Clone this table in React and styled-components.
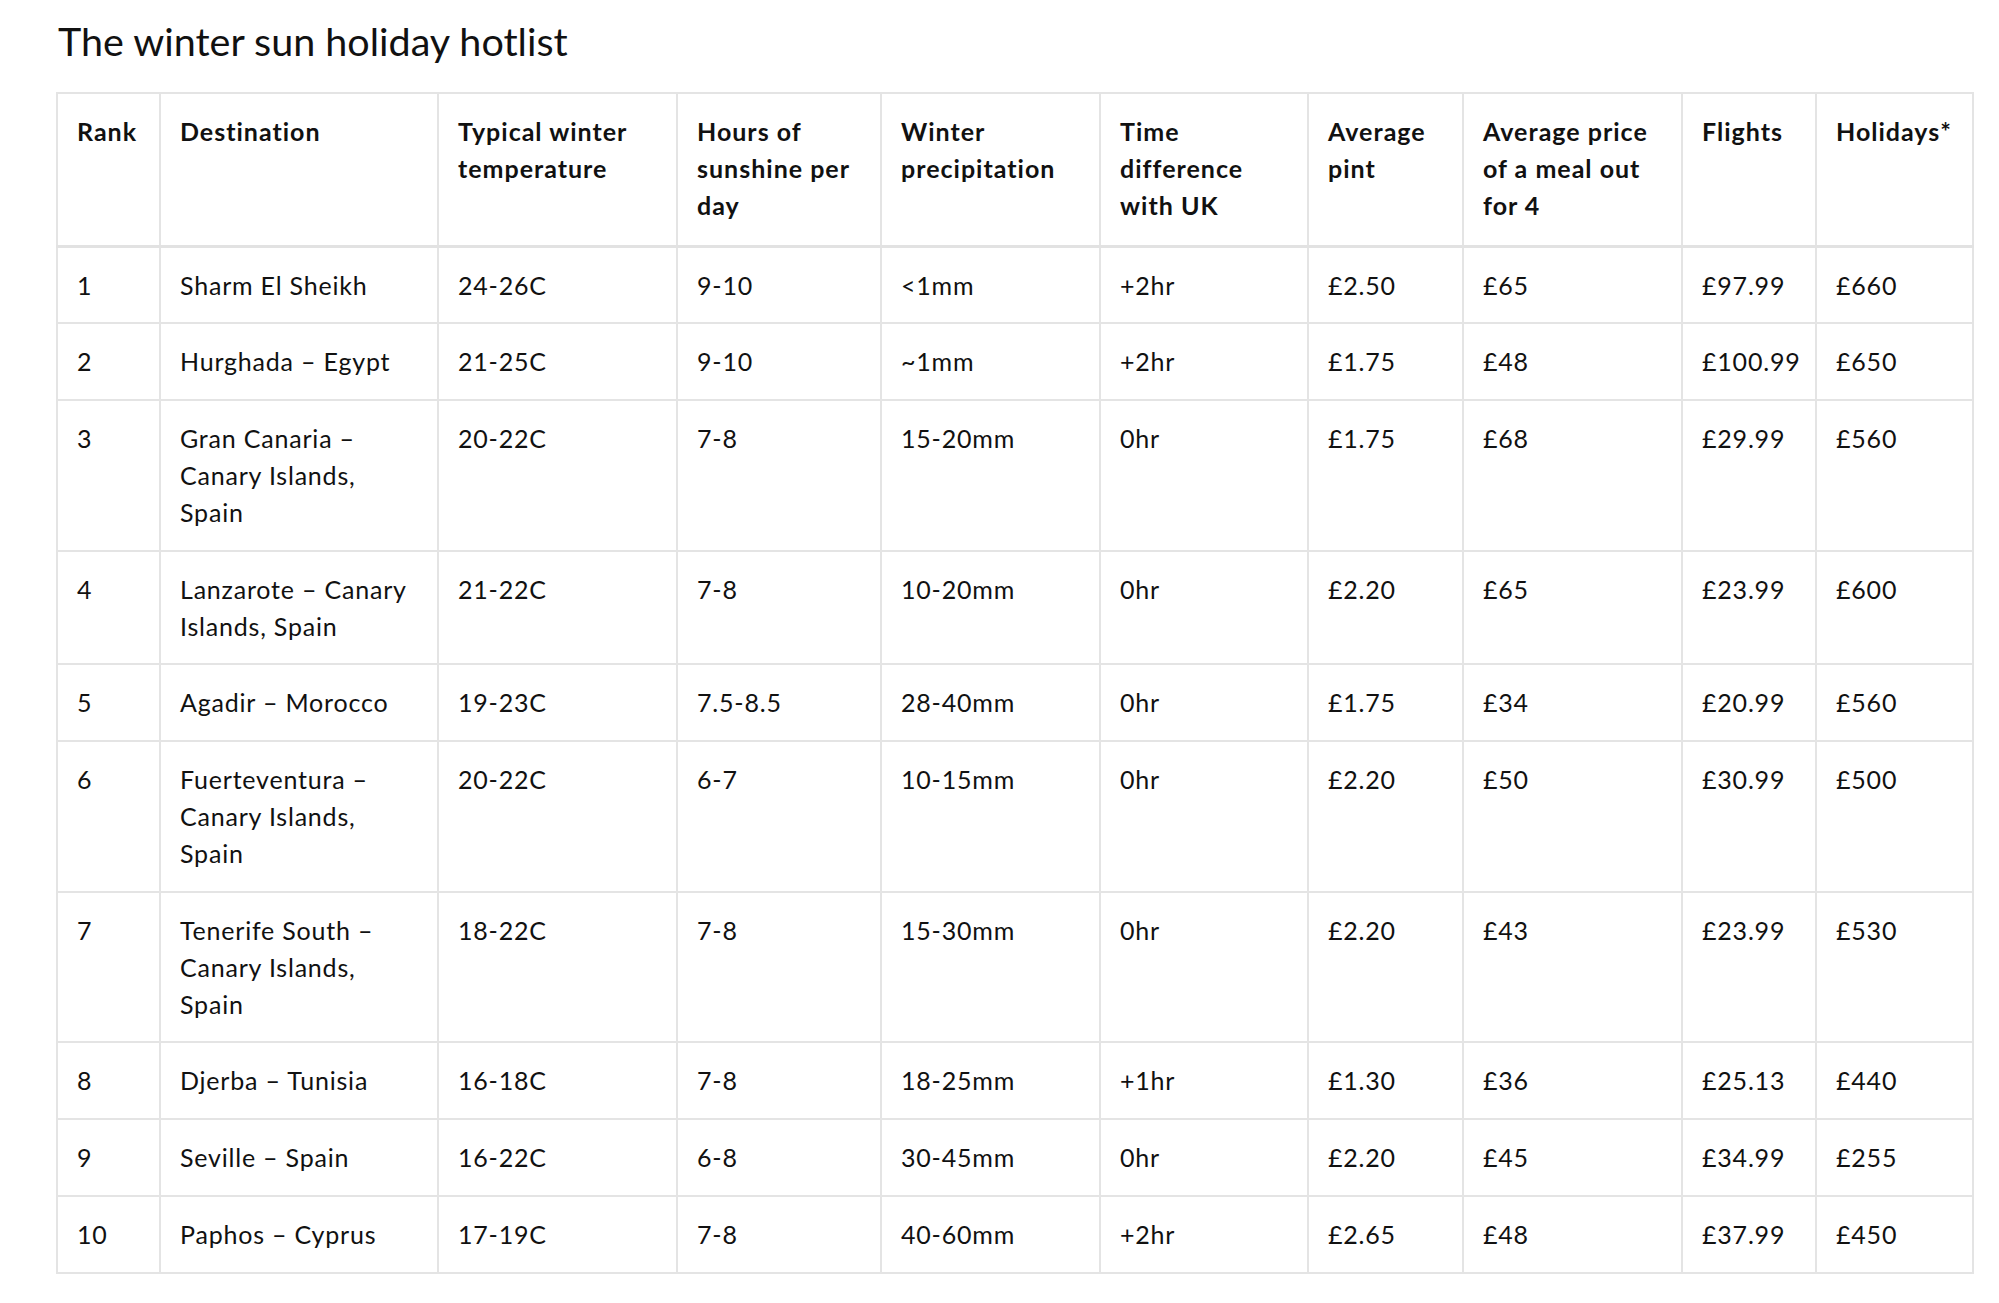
import React from 'react';
import styled, { createGlobalStyle } from 'styled-components';

const GlobalStyle = createGlobalStyle`
  html, body {
    margin: 0;
    padding: 0;
    background: #fff;
  }
  body {
    font-family: Lato, "Open Sans", "Liberation Sans", sans-serif;
    color: #111;
  }
`;

const Page = styled.div`
  padding: 15px 0 0 56px;
`;

const Title = styled.h2`
  margin: 0 0 25px 2px;
  font-size: 39.5px;
  font-weight: 400;
  line-height: 52px;
  color: #111;
`;

const Table = styled.table`
  width: 1916px;
  table-layout: fixed;
  border-collapse: collapse;
  border: 2px solid #e4e4e4;
  font-size: 25px;
  line-height: 36.85px;
  letter-spacing: 0.8px;
`;

const Col = styled.col`
  width: ${(p) => p.$w}px;
`;

const HeadCell = styled.th`
  padding: 19px 20px 21px 19px;
  text-align: left;
  vertical-align: top;
  font-weight: 700;
  letter-spacing: 1px;
  border-left: 2px solid #e4e4e4;
  border-bottom: 3px solid #e2e2e2;
`;

const Cell = styled.td`
  padding: 19px 20px 19px 19px;
  vertical-align: top;
  border-left: 2px solid #e4e4e4;
  border-top: 2px solid #e4e4e4;
`;

const columns = [
  ['Rank', 103],
  ['Destination', 278],
  ['Typical winter temperature', 239],
  ['Hours of sunshine per day', 204],
  ['Winter precipitation', 219],
  ['Time difference with UK', 208],
  ['Average pint', 155],
  ['Average price of a meal out for 4', 219],
  ['Flights', 134],
  ['Holidays*', 157],
];

const rows = [
  ['1', 'Sharm El Sheikh', '24-26C', '9-10', '<1mm', '+2hr', '£2.50', '£65', '£97.99', '£660'],
  ['2', 'Hurghada – Egypt', '21-25C', '9-10', '~1mm', '+2hr', '£1.75', '£48', '£100.99', '£650'],
  ['3', 'Gran Canaria – Canary Islands, Spain', '20-22C', '7-8', '15-20mm', '0hr', '£1.75', '£68', '£29.99', '£560'],
  ['4', 'Lanzarote – Canary Islands, Spain', '21-22C', '7-8', '10-20mm', '0hr', '£2.20', '£65', '£23.99', '£600'],
  ['5', 'Agadir – Morocco', '19-23C', '7.5-8.5', '28-40mm', '0hr', '£1.75', '£34', '£20.99', '£560'],
  ['6', 'Fuerteventura – Canary Islands, Spain', '20-22C', '6-7', '10-15mm', '0hr', '£2.20', '£50', '£30.99', '£500'],
  ['7', 'Tenerife South – Canary Islands, Spain', '18-22C', '7-8', '15-30mm', '0hr', '£2.20', '£43', '£23.99', '£530'],
  ['8', 'Djerba – Tunisia', '16-18C', '7-8', '18-25mm', '+1hr', '£1.30', '£36', '£25.13', '£440'],
  ['9', 'Seville – Spain', '16-22C', '6-8', '30-45mm', '0hr', '£2.20', '£45', '£34.99', '£255'],
  ['10', 'Paphos – Cyprus', '17-19C', '7-8', '40-60mm', '+2hr', '£2.65', '£48', '£37.99', '£450'],
];

export default function App() {
  return (
    <Page>
      <GlobalStyle />
      <Title>The winter sun holiday hotlist</Title>
      <Table>
        <colgroup>
          {columns.map(([label, w]) => (
            <Col key={label} $w={w} />
          ))}
        </colgroup>
        <thead>
          <tr>
            {columns.map(([label]) => (
              <HeadCell key={label}>{label}</HeadCell>
            ))}
          </tr>
        </thead>
        <tbody>
          {rows.map((row) => (
            <tr key={row[0]}>
              {row.map((value, i) => (
                <Cell key={i}>{value}</Cell>
              ))}
            </tr>
          ))}
        </tbody>
      </Table>
    </Page>
  );
}
